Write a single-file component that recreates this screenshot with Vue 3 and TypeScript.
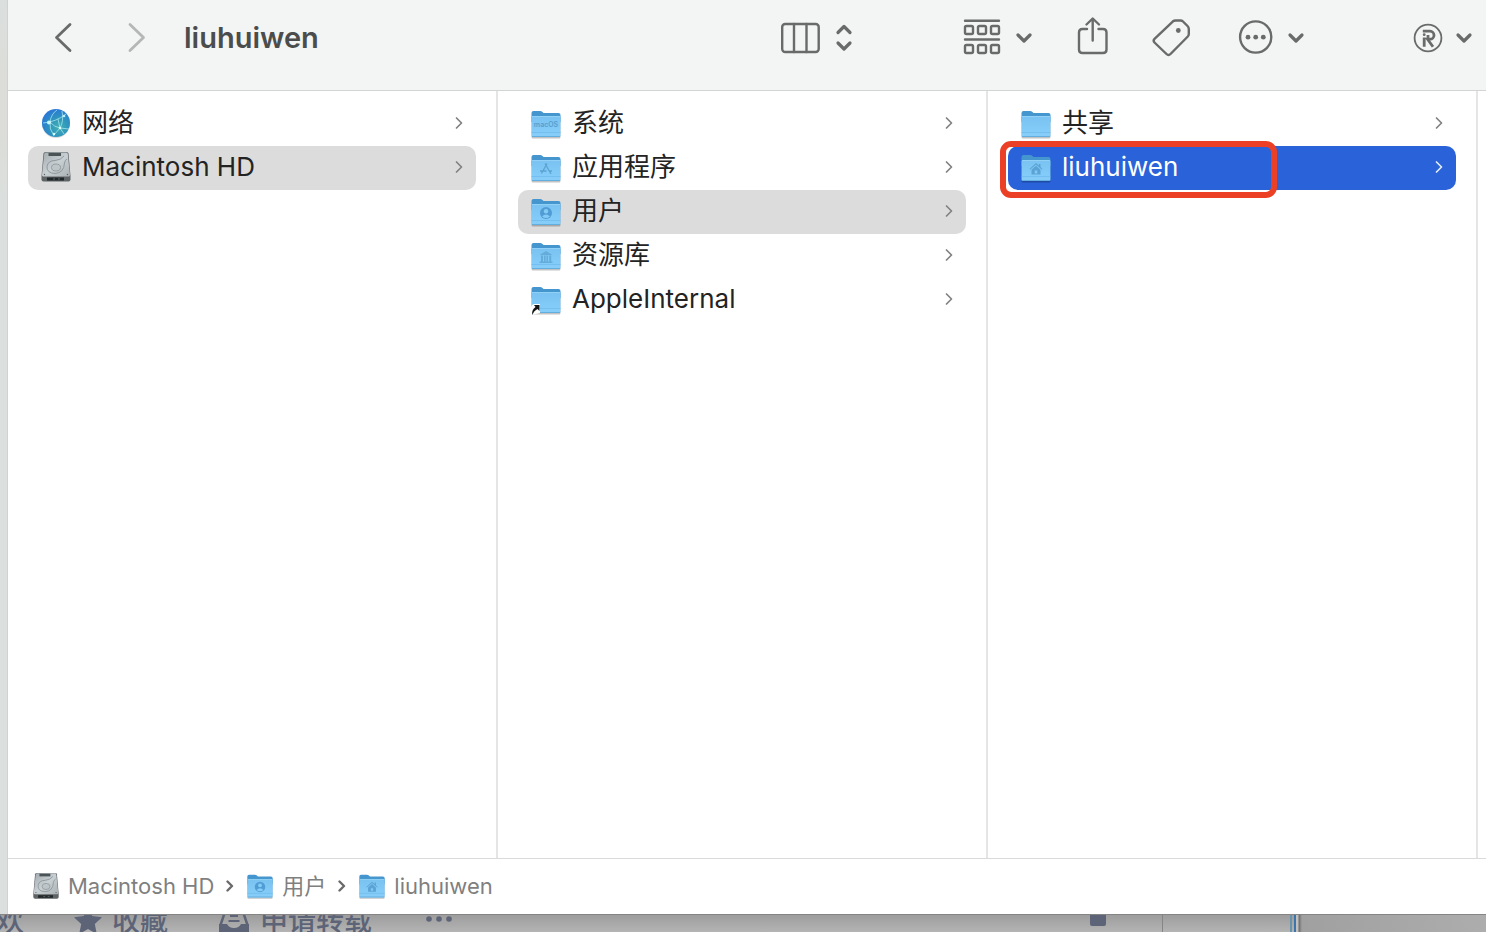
<script setup lang="ts">
import { ref } from 'vue'

type Kind = 'network' | 'disk' | 'plain' | 'macos' | 'apps' | 'user' | 'library' | 'alias' | 'home'

interface Item {
  name: string
  kind: Kind
}

interface Column {
  label: string
  items: Item[]
  selected: number
}

const title = ref('liuhuiwen')

const columns = ref<Column[]>([
  {
    label: '位置',
    selected: 1,
    items: [
      { name: '网络', kind: 'network' },
      { name: 'Macintosh HD', kind: 'disk' },
    ],
  },
  {
    label: 'Macintosh HD',
    selected: 2,
    items: [
      { name: '系统', kind: 'macos' },
      { name: '应用程序', kind: 'apps' },
      { name: '用户', kind: 'user' },
      { name: '资源库', kind: 'library' },
      { name: 'AppleInternal', kind: 'alias' },
    ],
  },
  {
    label: '用户',
    selected: 1,
    items: [
      { name: '共享', kind: 'plain' },
      { name: 'liuhuiwen', kind: 'home' },
    ],
  },
])

const trail: Item[] = [
  { name: 'Macintosh HD', kind: 'disk' },
  { name: '用户', kind: 'user' },
  { name: 'liuhuiwen', kind: 'home' },
]

const isActive = (c: number, i: number): boolean =>
  c === columns.value.length - 1 && columns.value[c].selected === i

const select = (c: number, i: number): void => {
  columns.value[c].selected = i
}
</script>

<template>
  <svg class="defs" aria-hidden="true">
    <defs>
      <linearGradient id="front" x1="0" y1="0" x2="0" y2="1">
        <stop offset="0" stop-color="#79c2f1" />
        <stop offset="1" stop-color="#87cefa" />
      </linearGradient>
      <linearGradient id="metal" x1="0" y1="0" x2="1" y2="1">
        <stop offset="0" stop-color="#a3abb0" />
        <stop offset="0.5" stop-color="#c9d0d4" />
        <stop offset="1" stop-color="#aab1b5" />
      </linearGradient>
      <radialGradient id="sea" cx="0.6" cy="0.65" r="0.65">
        <stop offset="0" stop-color="#45afb4" />
        <stop offset="0.5" stop-color="#2f96bd" />
        <stop offset="1" stop-color="#2a78d6" />
      </radialGradient>
      <symbol id="icon-network" viewBox="0 0 32 32">
        <circle cx="16" cy="17" r="14" fill="#000" opacity="0.14" />
        <circle cx="16" cy="16" r="14" fill="url(#sea)" />
        <path d="M3 16Q16 15 26 7M10 15Q14 20 20 21L29 22M10 15Q11 7 17 3M20 21Q24 14 22 4M10 15Q9 22 14 29M20 21L14 28M20 21L24 27M18 12L20 21" fill="none" stroke="#b9f3f5" stroke-width="0.9" opacity="0.75" />
        <circle cx="9" cy="15.500" r="2" fill="#c9f6fb" /><circle cx="20" cy="21" r="1.300" fill="#d9ffff" /><circle cx="24" cy="9" r="1.300" fill="#b9ecff" /><circle cx="14" cy="27" r="1.200" fill="#d9ffff" />
      </symbol>
      <symbol id="icon-disk" viewBox="0 0 32 32">
        <path d="M1.500 25L3.500 2.500Q3.700 1 5.500 1H26.500Q28.300 1 28.500 2.500L30.500 25V28.500Q30.500 30.500 28.500 30.500H3.500Q1.500 30.500 1.500 28.500Z" fill="#5f6466" />
        <path d="M4.200 3Q4.300 1.500 5.800 1.500H26.200Q27.700 1.500 27.800 3L30 24Q30 25.500 28.500 25.500H3.500Q2 25.500 2 24Z" fill="url(#metal)" />
        <rect x="8.500" y="2" width="12.500" height="3" fill="#4c5357" />
        <path d="M27 8Q25 9 24.500 12Q24 22 15 22.500Q6.500 22 7 15.500Q8 9.500 15 9.500Q21 9 24 5" fill="none" stroke="#8a9398" stroke-width="0.900" />
        <ellipse cx="16" cy="16.500" rx="4.500" ry="3.500" fill="#bdc5c9" stroke="#8a9398" stroke-width="0.800" />
        <circle cx="4.500" cy="23.500" r="0.700" fill="#596064" /><circle cx="27.500" cy="23.500" r="0.700" fill="#596064" />
        <path d="M7 26.500H24V29.500H7Z" fill="#222829" />
        <path d="M13 28H15M18 28H20" stroke="#586567" />
      </symbol>
      <symbol id="icon-folder" viewBox="0 0 32 32">
        <rect x="1.500" y="8" width="29" height="22.600" rx="1.500" fill="#000" opacity="0.24" />
        <path d="M1.500 5Q1.500 3 3.500 3H10Q11.500 3 12.500 4L13.500 5H28.500Q30.500 5 30.500 7V14H1.500Z" fill="#4596cf" />
        <path d="M1.500 9.500Q1.500 8 3 8H29Q30.500 8 30.500 9.500V27.500Q30.500 29 29 29H3Q1.500 29 1.500 27.500Z" fill="url(#front)" />
        <path d="M2 8.500H30" stroke="#97d4f7" stroke-width="0.800" />
        <path d="M1.500 24.500H30.500" stroke="#6cb9e9" stroke-width="0.700" />
        <path d="M2 28.500H30" stroke="#62aede" stroke-width="1" />
      </symbol>
      <symbol id="badge-user" viewBox="0 0 32 32">
        <circle cx="16" cy="17" r="6" fill="#509dd5" /><circle cx="16" cy="15.200" r="2.200" fill="#85cbf7" /><path d="M12 20.500Q16 16.500 20 20.500Q16 23.500 12 20.500" fill="#85cbf7" />
      </symbol>
      <symbol id="badge-home" viewBox="0 0 32 32">
        <path d="M9.500 17L16 11L19 13.600V12H20.500V15L22.500 17L22 17.700L16 12.500L10 17.700ZM11.500 17.700L16 13.800L20.500 17.700V22.500H11.500ZM14.700 18.500V21.500H17.300V18.500Z" fill="#5aa3d4" fill-rule="evenodd" />
      </symbol>
    </defs>
  </svg>

  <div class="desktop">
    <div class="side-edge"></div>
    <main class="window">
      <header class="toolbar">
        <nav class="history" aria-label="历史">
          <button type="button" aria-label="返回">
            <svg width="24" height="40" viewBox="0 0 24 40"><path class="line thick" d="M20 6.500L6.500 19.500L20 32.500" /></svg>
          </button>
          <button type="button" class="dim" aria-label="前进">
            <svg width="24" height="40" viewBox="0 0 24 40"><path class="line thick" d="M4 6.500L17.500 19.500L4 32.500" /></svg>
          </button>
        </nav>
        <h1>{{ title }}</h1>
        <div class="tools">
          <button type="button" aria-label="显示方式">
            <svg width="42" height="40" viewBox="0 0 42 40"><rect class="line" x="2.200" y="6" width="36.500" height="28" rx="3" /><path class="line" d="M14 6V34M26.500 6V34" /></svg>
            <svg width="16" height="40" viewBox="0 0 16 40"><path class="line bold" d="M2 14.500L8 8.500L14 14.500M2 25L8 31L14 25" /></svg>
          </button>
          <div class="group">
            <button type="button" aria-label="群组">
              <svg width="42" height="40" viewBox="0 0 42 40">
                <path class="line" d="M5 2.700H39M5 21.500H39" />
                <path class="line" d="M6.500 8H11.500Q13 8 13 9.500V14.500Q13 16 11.500 16H6.500Q5 16 5 14.500V9.500Q5 8 6.500 8ZM19.500 8H24.500Q26 8 26 9.500V14.500Q26 16 24.500 16H19.500Q18 16 18 14.500V9.500Q18 8 19.500 8ZM32.500 8H37.500Q39 8 39 9.500V14.500Q39 16 37.500 16H32.500Q31 16 31 14.500V9.500Q31 8 32.500 8ZM6.500 27H11.500Q13 27 13 28.500V33.500Q13 35 11.500 35H6.500Q5 35 5 33.500V28.500Q5 27 6.500 27ZM19.500 27H24.500Q26 27 26 28.500V33.500Q26 35 24.500 35H19.500Q18 35 18 33.500V28.500Q18 27 19.500 27ZM32.500 27H37.500Q39 27 39 28.500V33.500Q39 35 37.500 35H32.500Q31 35 31 33.500V28.500Q31 27 32.500 27Z" />
              </svg>
              <svg width="16" height="40" viewBox="0 0 16 40"><path class="line bold" d="M2 17L8 23L14 17" /></svg>
            </button>
            <button type="button" aria-label="共享">
              <svg width="32" height="40" viewBox="0 0 32 40"><path class="line" d="M11 11H6.500Q3 11 3 14.500V31.500Q3 35 6.500 35H27Q30.500 35 30.500 31.500V14.500Q30.500 11 27 11H22.500M16.700 22.500V1M10.500 6.500L16.700 0.500L23 6.500" /></svg>
            </button>
            <button type="button" aria-label="标签">
              <svg width="40" height="40" viewBox="0 0 40 40"><path class="line" d="M21 3.300Q22 2.500 23.500 2.500H28.500Q30 2.500 31 3.500L35.500 8Q36.800 9.300 36.800 11V16Q36.800 17.500 35.800 18.500L18.500 36Q16.500 38 14.500 36L2.500 24.500Q0.800 22.500 2.500 20.800Z" /><circle cx="26.300" cy="12.500" r="2.400" fill="currentColor" /></svg>
            </button>
            <button type="button" aria-label="更多">
              <svg width="38" height="40" viewBox="0 0 38 40"><circle class="line" cx="19.700" cy="19" r="15.600" /><g fill="currentColor"><circle cx="12" cy="19.200" r="2.400" /><circle cx="19.700" cy="19.200" r="2.400" /><circle cx="27.300" cy="19.200" r="2.400" /></g></svg>
              <svg width="16" height="40" viewBox="0 0 16 40"><path class="line bold" d="M2 17L8 23L14 17" /></svg>
            </button>
          </div>
          <button type="button" aria-label="右键助手">
            <svg width="30" height="40" viewBox="0 0 30 40"><circle class="line fine" cx="16" cy="20" r="13.400" /><path d="M10.800 13.200H18A4 4 0 0 1 18 21.200H15.500L21 28.800M12.200 19.500V28.800M16 17V22" fill="none" stroke="currentColor" stroke-width="2.800" /><circle cx="12.200" cy="16.700" r="1.400" fill="currentColor" /></svg>
            <svg width="16" height="40" viewBox="0 0 16 40"><path class="line bold" d="M2 17L8 23L14 17" /></svg>
          </button>
        </div>
      </header>

      <div class="columns">
        <ul v-for="(col, c) in columns" :key="c" class="column" :aria-label="col.label">
          <li v-for="(item, i) in col.items" :key="item.name" class="cell">
            <button type="button" class="row" :class="{ chosen: col.selected === i, active: isActive(c, i) }" @click="select(c, i)">
              <svg v-if="item.kind === 'network' || item.kind === 'disk'" class="icon" viewBox="0 0 32 32" aria-hidden="true">
                <use :href="item.kind === 'disk' ? '#icon-disk' : '#icon-network'" />
              </svg>
              <svg v-else class="icon" viewBox="0 -1 32 32" aria-hidden="true">
                <use href="#icon-folder" width="32" height="32" />
                <text v-if="item.kind === 'macos'" class="badge-text" x="16" y="19" text-anchor="middle">macOS</text>
                <path v-if="item.kind === 'apps'" d="M17 11.500L11.500 21.500M15 11.500L21 22M10 19H16.500M19.500 19H22" fill="none" stroke="#5ba3d3" stroke-width="1.300" />
                <use v-if="item.kind === 'user'" href="#badge-user" width="32" height="32" />
                <path v-if="item.kind === 'library'" d="M9.500 15L16 11L22.500 15ZM11 15.500H13V21.500H11ZM14 15.500H15.600V21.500H14ZM16.500 15.500H18V21.500H16.500ZM19.200 15.500H21.200V21.500H19.200ZM9.500 21.500H22.500V23H9.500Z" fill="#65acda" />
                <use v-if="item.kind === 'home'" href="#badge-home" width="32" height="32" />
                <g v-if="item.kind === 'alias'"><path d="M1 31V24Q1 20 5 20H10V29Z" fill="#fff" /><path d="M4 21H9.500V27L7.500 25Q3.500 27 2.500 31Q1 26.500 5.500 23Z" fill="#151515" /></g>
              </svg>
              <span class="name">{{ item.name }}</span>
              <svg class="chevron" viewBox="0 0 10 14" aria-hidden="true"><path d="M2.500 2L7.500 7L2.500 12" /></svg>
            </button>
            <span v-if="isActive(c, i)" class="marker"></span>
          </li>
        </ul>
      </div>

      <nav class="path-bar" aria-label="路径">
        <template v-for="(item, i) in trail" :key="item.name">
          <svg v-if="i > 0" class="step" viewBox="0 0 8 12" aria-hidden="true"><path d="M1.500 1.500L6 6L1.500 10.500" /></svg>
          <a href="#" class="crumb">
            <svg class="icon small" viewBox="0 0 32 32" aria-hidden="true">
              <use :href="item.kind === 'disk' ? '#icon-disk' : '#icon-folder'" />
              <use v-if="item.kind === 'user'" href="#badge-user" />
              <use v-if="item.kind === 'home'" href="#badge-home" />
            </svg>
            <span>{{ item.name }}</span>
          </a>
        </template>
      </nav>
    </main>

    <footer class="behind">
      <span class="like">欢</span>
      <span class="action">
        <svg width="28" height="28" viewBox="0 0 28 28"><path d="M14 0L18.200 9L28 10.200L20.800 17L22.800 27L14 22L5.200 27L7.200 17L0 10.200L9.800 9Z" fill="currentColor" /></svg>
        收藏
      </span>
      <span class="action">
        <svg width="32" height="28" viewBox="0 0 32 28"><path d="M8 2H24L29.500 18V25H2.500V18Z" fill="none" stroke="currentColor" stroke-width="2.500" /><path d="M1 17H9Q11 21 16 21T23 17H31V24Q31 26 29 26H3Q1 26 1 24Z" fill="currentColor" /><path d="M12 9H20M10.500 14H21.500" stroke="currentColor" stroke-width="2.200" /></svg>
        申请转载
      </span>
      <svg class="dots" width="26" height="28" viewBox="0 0 26 28"><g fill="currentColor"><circle cx="3" cy="15" r="2.800" /><circle cx="13" cy="15" r="2.800" /><circle cx="23" cy="15" r="2.800" /></g></svg>
      <div class="panel"><i class="block"></i></div>
      <div class="gutter"></div>
      <div class="far"></div>
    </footer>
  </div>
</template>

<style>
body {
  background: #b0b0b0;
}
</style>

<style scoped>
.defs {
  position: absolute;
  width: 0;
  height: 0;
}

.desktop {
  display: grid;
  grid-template-columns: 8px minmax(0, 1fr);
  grid-template-rows: minmax(0, 1fr) 18px;
  height: 100vh;
  overflow: hidden;
  font-family: Inter, 'Noto Sans CJK SC', sans-serif;
  color: #232323;
}

.side-edge {
  background: linear-gradient(#dbdfde, #dcddd8 80px, #dcddd8 130px, #dbdfdd 200px);
  border-right: 1px solid #d0d2d1;
}

.window {
  display: flex;
  flex-direction: column;
  background: #fff;
}

button {
  display: flex;
  align-items: center;
  padding: 0;
  border: 0;
  background: none;
  color: inherit;
  font: inherit;
  text-align: left;
}

.toolbar {
  display: flex;
  align-items: center;
  height: 90px;
  padding: 0 14px 14px 42px;
  box-sizing: border-box;
  background: #f3f5f4;
  color: #696b6a;
}

.toolbar svg {
  display: block;
  overflow: visible;
}

.toolbar button {
  gap: 14px;
}

.line {
  fill: none;
  stroke: currentColor;
  stroke-width: 2.4;
  stroke-linecap: round;
  stroke-linejoin: round;
}

.thick {
  stroke-width: 2.8;
}

.bold {
  stroke-width: 3.2;
}

.fine {
  stroke-width: 1.8;
}

.history {
  display: flex;
  gap: 52px;
}

.dim {
  color: #b5b7b6;
}

h1 {
  margin: 0 0 0 34px;
  font-size: 29px;
  line-height: 40px;
  font-weight: 600;
  color: #4b4d4c;
}

.tools {
  display: flex;
  gap: 108px;
  margin-left: auto;
}

.group {
  display: flex;
  gap: 44px;
}

.columns {
  flex: 1;
  display: grid;
  grid-template-columns: repeat(3, minmax(0, 1fr));
  padding-right: 8px;
  border-top: 1px solid #d3d5d4;
}

.column {
  margin: 0;
  padding: 11px 20px;
  list-style: none;
  border-right: 2px solid #e5e5e5;
}

.cell {
  position: relative;
}

.row {
  width: 100%;
  height: 44px;
  padding: 0 12px 2px;
  gap: 10px;
  border-radius: 10px;
  font-size: 26px;
  line-height: 40px;
}

.icon {
  flex: none;
  width: 32px;
  height: 32px;
}

.small {
  width: 28px;
  height: 28px;
}

.badge-text {
  font-family: Inter, sans-serif;
  font-size: 7px;
  font-weight: 600;
  fill: #559fd0;
}

.name {
  flex: 1;
  white-space: nowrap;
}

.chevron {
  width: 10px;
  height: 14px;
}

.chevron path,
.step path {
  fill: none;
  stroke: #828282;
  stroke-width: 1.7;
  stroke-linecap: round;
  stroke-linejoin: round;
}

.chosen {
  background: #dcdcdc;
}

.active {
  background: #2962d9;
  color: #fff;
}

.active .chevron path {
  stroke: #e4ebfa;
}

.marker {
  position: absolute;
  top: -5px;
  left: -8px;
  width: 277px;
  height: 57px;
  box-sizing: border-box;
  border: 6px solid #ec4026;
  border-radius: 11px;
  pointer-events: none;
}

.path-bar {
  display: flex;
  align-items: center;
  gap: 12px;
  height: 56px;
  padding: 0 0 1px 24px;
  box-sizing: border-box;
  border-top: 1px solid #dadada;
}

.crumb {
  display: flex;
  align-items: center;
  gap: 8px;
  color: #7f7f7f;
  font-size: 22px;
  line-height: 32px;
  text-decoration: none;
}

.step {
  width: 8px;
  height: 12px;
}

.step path {
  stroke: #6b6b6b;
  stroke-width: 2.4;
}

.behind {
  grid-column: 1 / -1;
  display: flex;
  align-items: flex-end;
  overflow: hidden;
  background: linear-gradient(#9d9d9d, #b4b4b4);
  border-top: 1px solid #858585;
  box-sizing: border-box;
  color: #5d6477;
  font-size: 28px;
  line-height: 28px;
  font-weight: 500;
  white-space: nowrap;
}

.like {
  width: 24px;
  direction: rtl;
}

.like,
.action {
  margin-bottom: -3px;
}

.action {
  display: flex;
  gap: 10px;
  margin-left: 50px;
}

.action svg,
.dots {
  flex: none;
}

.dots {
  margin-left: 54px;
}

.panel {
  flex: 1;
  align-self: stretch;
  display: flex;
  justify-content: flex-end;
  padding-right: 56px;
  border-right: 1px solid #858585;
}

.block {
  width: 16px;
  height: 11px;
  border-radius: 0 0 2px 2px;
  background: #5d6477;
}

.gutter {
  width: 127px;
  align-self: stretch;
  border-right: 2px solid #6a94ab;
}

.far {
  width: 190px;
  align-self: stretch;
  margin-left: 2px;
  border-left: 2px solid #3a75ab;
  background: linear-gradient(90deg, #c0c0c0 2px, #6e6e6e 3px, #a0a0a0 6px, #adadad);
}
</style>
